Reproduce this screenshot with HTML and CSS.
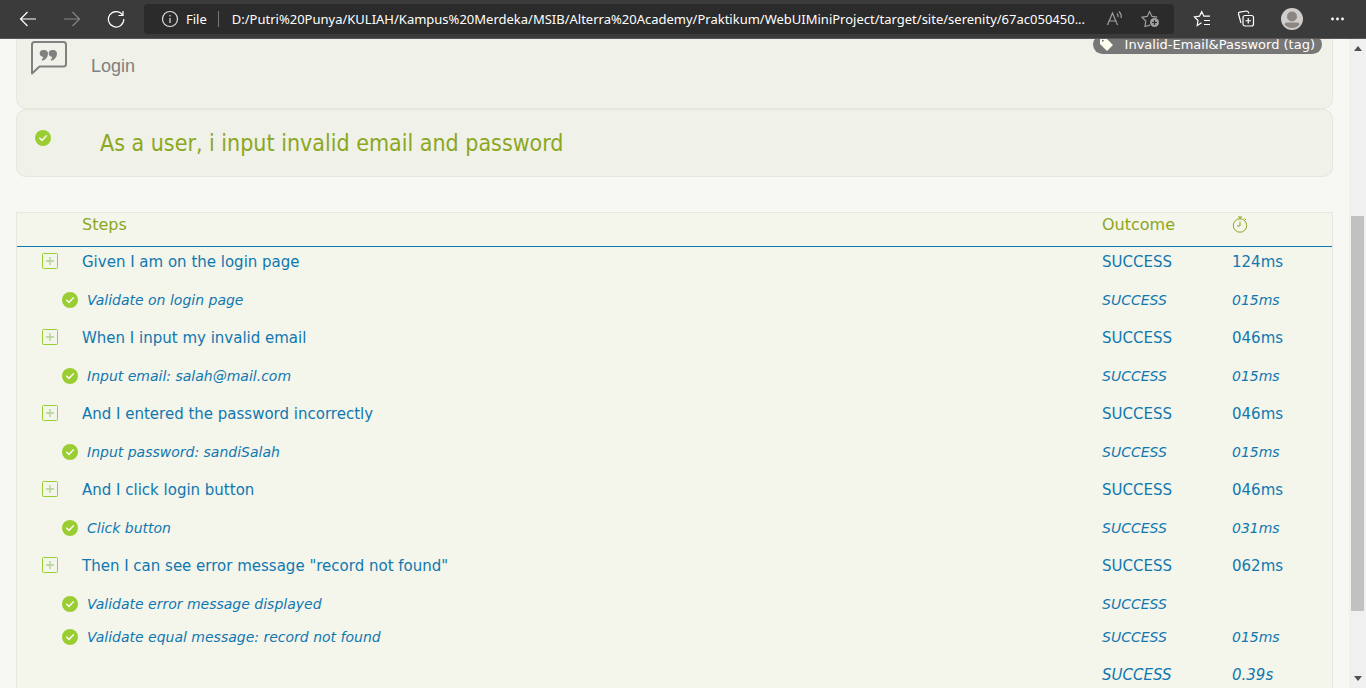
FILE: index.html
```html
<!DOCTYPE html>
<html lang="en">
<head>
<meta charset="utf-8">
<title>Serenity Report</title>
<link rel="stylesheet" href="styles.css">
</head>
<body>
<svg class="defs" aria-hidden="true">
  <symbol id="check" viewBox="0 0 16 16"><circle cx="8" cy="8" r="8" fill="#9acd32"/><path d="M4.8 8.2 7 10.4l4.400-4.600" fill="none" stroke="#f4f6ea" stroke-width="1.6" stroke-linecap="round" stroke-linejoin="round"/></symbol>
  <symbol id="plus" viewBox="0 0 16 16"><rect x=".5" y=".5" width="15" height="15" rx="1" fill="none" stroke="#9acd32"/><path d="M8 4v8M4 8h8" stroke="#b0d498" stroke-width="1.400"/></symbol>
</svg>
<header class="toolbar">
  <nav class="tools">
    <button class="tool" aria-label="Back"><svg width="18" height="16" viewBox="0 0 18 16"><path d="M17 8H1.500M8.500 1 1.500 8l7 7"/></svg></button>
    <button class="tool forward" aria-label="Forward"><svg width="18" height="16" viewBox="0 0 18 16"><path d="M1 8h15.500M9.500 1l7 7-7 7"/></svg></button>
    <button class="tool" aria-label="Refresh"><svg width="18" height="18" viewBox="0 0 18 18"><path d="M15.500 5A7.700 7.700 0 1 0 16.800 9M16 1v4.500h-4.500"/></svg></button>
  </nav>
  <div class="address">
    <svg class="info" width="18" height="18" viewBox="0 0 18 18"><circle cx="9" cy="9" r="7.500"/><path d="M9 8v5M9 5v1.500"/></svg>
    <span class="scheme">File</span>
    <span class="url">D:/Putri%20Punya/KULIAH/Kampus%20Merdeka/MSIB/Alterra%20Academy/Praktikum/WebUIMiniProject/target/site/serenity/67ac050450...</span>
    <button class="tool dim read" aria-label="Read aloud"><svg width="18" height="16" viewBox="0 0 18 16"><path d="M1.500 14 6.500 2l5 12M3.200 10h6.600M11 2.500q1.500 1.500 1 3.500M13 .5q3 3 2 6.500"/></svg></button>
    <button class="tool dim" aria-label="Add to favorites"><svg width="20" height="18" viewBox="0 0 20 18"><path d="M9 15.200 4 16.500l.8-5.500L1 7.200l5.200-.8L8.600 1.500 11 6.400l5.200.8"/><circle cx="13.500" cy="12.500" r="4.500" fill="#a0a0a0" stroke="none"/><path d="M13.500 10v5M11 12.500h5" stroke="#2b2b2b"/></svg></button>
  </div>
  <nav class="tools">
    <button class="tool" aria-label="Favorites"><svg width="18" height="18" viewBox="0 0 18 18"><path d="M8.500 12.800 4.200 15.500l.8-5L1.500 7l5-.8L8.700 1.700l2.200 4.500H17M11 10.500h6M11 14.500h6"/></svg></button>
    <button class="tool" aria-label="Collections"><svg width="18" height="18" viewBox="0 0 18 18"><path d="M4 13 1.500 4Q1.200 2.500 2.700 2.200L9.500 1q1.500 0 2 1.500l.3 1"/><rect x="6" y="5.500" width="10.500" height="10.500" rx="2"/><path d="M11.250 8v5.500M8.500 10.750H14"/></svg></button>
    <button class="tool" aria-label="Profile"><svg width="22" height="22" viewBox="0 0 22 22" stroke="none"><circle cx="11" cy="11" r="11" fill="#d0cecc"/><circle cx="11" cy="8.500" r="5" fill="#8b8682"/><path d="M3.500 16.500Q3.500 14.500 6 14.500H16Q18.500 14.500 18.500 16.500 15.500 20 11 20T3.500 16.500Z" fill="#8b8682"/></svg></button>
    <button class="tool" aria-label="Settings and more"><svg width="16" height="4" viewBox="0 0 16 4" stroke="none" fill="#fff"><circle cx="3.500" cy="2" r="1.400"/><circle cx="8.500" cy="2" r="1.400"/><circle cx="13.500" cy="2" r="1.400"/></svg></button>
  </nav>
</header>
<div class="viewport">
  <main class="page">
    <section class="card feature">
      <svg class="quote" width="36" height="34" viewBox="0 0 36 34"><path d="M3.500 1H32.500Q35 1 35 3.500V23Q35 25.500 32.500 25.500H8.500L1 32.500V3.500Q1 1 3.500 1Z" fill="none" stroke="#808080" stroke-width="2" stroke-linejoin="round"/><path d="M13 9a3.500 3.500 0 1 0-.8 6.900Q12 18 10.500 18.600l1.200 1.200Q17 17.500 17 12.500A3.800 3.800 0 0 0 13 9ZM22 9a3.500 3.500 0 1 0-.8 6.900Q21 18 19.500 18.600l1.200 1.200Q26 17.500 26 12.500A3.800 3.800 0 0 0 22 9Z" fill="#808080"/></svg>
      <h2 class="feature-name">Login</h2>
      <a class="tag" href="#"><svg width="13" height="13" viewBox="0 0 13 13"><path d="M0 1.500Q0 0 1.500 0H6L12.500 6.500Q13 7 12.500 7.500l-5 5Q7 13 6.500 12.500L0 6Z" fill="#fffff0"/><circle cx="2.800" cy="2.800" r="1" fill="#777"/></svg>Invalid-Email&amp;Password (tag)</a>
    </section>
    <section class="card scenario">
      <svg class="icon"><use href="#check"/></svg>
      <h1 class="scenario-name">As a user, i input invalid email and password</h1>
    </section>
    <table class="steps">
      <colgroup><col class="c-icon"><col><col class="c-outcome"><col class="c-time"></colgroup>
      <thead>
        <tr><th></th><th>Steps</th><th>Outcome</th><th><svg class="clock" width="16" height="17" viewBox="0 0 16 17" role="img" aria-label="Duration"><circle cx="8" cy="9.500" r="6.700"/><path d="M8 5.500V10H5M6 1h4M8 1v2M12.500 2.500l1.500 1.500"/></svg></th></tr>
      </thead>
      <tbody>
        <tr class="main"><td><button class="toggle" aria-label="Expand"><svg class="icon"><use href="#plus"/></svg></button></td><td>Given I am on the login page</td><td>SUCCESS</td><td>124ms</td></tr>
        <tr class="sub"><td colspan="2"><span class="nested"><svg class="icon"><use href="#check"/></svg>Validate on login page</span></td><td>SUCCESS</td><td>015ms</td></tr>
        <tr class="main"><td><button class="toggle" aria-label="Expand"><svg class="icon"><use href="#plus"/></svg></button></td><td>When I input my invalid email</td><td>SUCCESS</td><td>046ms</td></tr>
        <tr class="sub"><td colspan="2"><span class="nested"><svg class="icon"><use href="#check"/></svg>Input email: salah@mail.com</span></td><td>SUCCESS</td><td>015ms</td></tr>
        <tr class="main"><td><button class="toggle" aria-label="Expand"><svg class="icon"><use href="#plus"/></svg></button></td><td>And I entered the password incorrectly</td><td>SUCCESS</td><td>046ms</td></tr>
        <tr class="sub"><td colspan="2"><span class="nested"><svg class="icon"><use href="#check"/></svg>Input password: sandiSalah</span></td><td>SUCCESS</td><td>015ms</td></tr>
        <tr class="main"><td><button class="toggle" aria-label="Expand"><svg class="icon"><use href="#plus"/></svg></button></td><td>And I click login button</td><td>SUCCESS</td><td>046ms</td></tr>
        <tr class="sub"><td colspan="2"><span class="nested"><svg class="icon"><use href="#check"/></svg>Click button</span></td><td>SUCCESS</td><td>031ms</td></tr>
        <tr class="main"><td><button class="toggle" aria-label="Expand"><svg class="icon"><use href="#plus"/></svg></button></td><td>Then I can see error message "record not found"</td><td>SUCCESS</td><td>062ms</td></tr>
        <tr class="sub"><td colspan="2"><span class="nested"><svg class="icon"><use href="#check"/></svg>Validate error message displayed</span></td><td>SUCCESS</td><td></td></tr>
        <tr class="sub"><td colspan="2"><span class="nested"><svg class="icon"><use href="#check"/></svg>Validate equal message: record not found</span></td><td>SUCCESS</td><td>015ms</td></tr>
      </tbody>
      <tfoot>
        <tr class="total"><td colspan="2"></td><td>SUCCESS</td><td>0.39s</td></tr>
      </tfoot>
    </table>
  </main>
  <div class="scrollbar">
    <svg width="8" height="5" viewBox="0 0 8 5"><path d="M0 5 4 0l4 5Z"/></svg>
    <div class="track"><div class="thumb"></div></div>
    <svg width="8" height="5" viewBox="0 0 8 5"><path d="M0 0h8L4 5Z"/></svg>
  </div>
</div>
</body>
</html>
```
FILE: styles.css
```css
* { box-sizing: border-box; }
body {
  margin: 0;
  height: 100vh;
  display: flex;
  flex-direction: column;
  overflow: hidden;
  background: #f7f8f3;
  color: #1078b0;
  font-family: Verdana, "DejaVu Sans", sans-serif;
  font-size: 15px;
}
.defs { position: absolute; width: 0; height: 0; }
svg { display: block; flex: none; }

.toolbar {
  position: relative;
  z-index: 1;
  flex: none;
  height: 39px;
  display: flex;
  align-items: center;
  gap: 19px;
  padding: 0 21px 0 19px;
  background: #3b3b3b;
  border-bottom: 1px solid #5a5559;
  color: #fff;
  font-family: "Segoe UI", "Noto Sans", sans-serif;
  font-size: 13px;
}
.tools { display: flex; align-items: center; gap: 26px; }
.tool {
  flex: none;
  padding: 0;
  border: 0;
  background: none;
  fill: none;
  stroke: #fff;
  stroke-width: 1.2;
}
.forward { stroke: #858585; }
.dim { stroke: #a0a0a0; }
.address {
  flex: 1;
  min-width: 0;
  height: 30px;
  display: flex;
  align-items: center;
  padding: 0 13px 0 17px;
  border-radius: 4px;
  background: #2b2b2b;
}
.info { fill: none; stroke: #e0e0e0; stroke-width: 1.2; }
.scheme { padding: 0 11px 0 7px; border-right: 1px solid #777; line-height: 16px; }
.url {
  flex: 1;
  min-width: 0;
  padding-left: 13px;
  overflow: hidden;
  white-space: nowrap;
}
.read { margin-right: 17px; }

.viewport { flex: 1; min-height: 0; display: flex; }
.page { flex: 1; min-width: 0; padding: 0 16px; }
.card {
  display: flex;
  align-items: flex-start;
  border: 1px solid #e5e7e0;
  border-radius: 10px;
  background: #f0f1e8;
}
.feature { height: 90px; margin-top: -20px; padding: 19px 10px 0 14px; }
.feature-name {
  flex: 1;
  margin: 17px 0 0 24px;
  color: #808080;
  font: 18px/20px "Liberation Sans", Arial, sans-serif;
}
.quote { margin-top: 2px; }
.tag {
  display: flex;
  align-items: center;
  gap: 12px;
  height: 19px;
  margin-top: -4px;
  padding: 0 7px;
  border-radius: 10px;
  background: #777;
  color: #fff;
  font-size: 13px;
  text-decoration: none;
}
.scenario { height: 68px; padding: 20px 18px; }
.scenario-name {
  margin: 0 0 0 49px;
  color: #8ba71e;
  font-family: Tahoma, "DejaVu Sans Condensed", sans-serif;
  font-size: 23px;
  font-weight: normal;
  line-height: 26px;
}
.icon { width: 16px; height: 16px; }

.steps {
  width: 100%;
  margin-top: 35px;
  table-layout: fixed;
  border-collapse: separate;
  border-spacing: 0;
  border: 1px solid #e5e7e0;
  background: #f4f5eb;
}
.c-icon { width: 65px; }
.c-outcome { width: 130px; }
.c-time { width: 100px; }
th, td { padding: 0; text-align: left; vertical-align: top; line-height: 20px; }
th {
  height: 34px;
  padding-top: 2px;
  border-bottom: 1px solid #1078b0;
  color: #8ba71e;
  font-size: 16px;
  font-weight: normal;
}
.clock { margin-top: 1px; fill: none; stroke: #8ba71e; }
.main td, .total td { height: 43px; padding-top: 5px; }
.sub td { height: 33px; font-size: 14px; }
.sub td, .total td { font-style: italic; }
.toggle { display: block; margin: 1px 0 0 25px; padding: 0; border: 0; background: none; }
.nested { display: flex; align-items: center; gap: 9px; padding-left: 45px; }

.scrollbar {
  flex: none;
  width: 17px;
  display: flex;
  flex-direction: column;
  align-items: center;
  padding: 7px 2px;
  background: #f0f0f0;
  fill: #505050;
}
.track { flex: 1; width: 100%; padding-top: 165px; }
.thumb { height: 395px; background: #c1c1c1; }
```
